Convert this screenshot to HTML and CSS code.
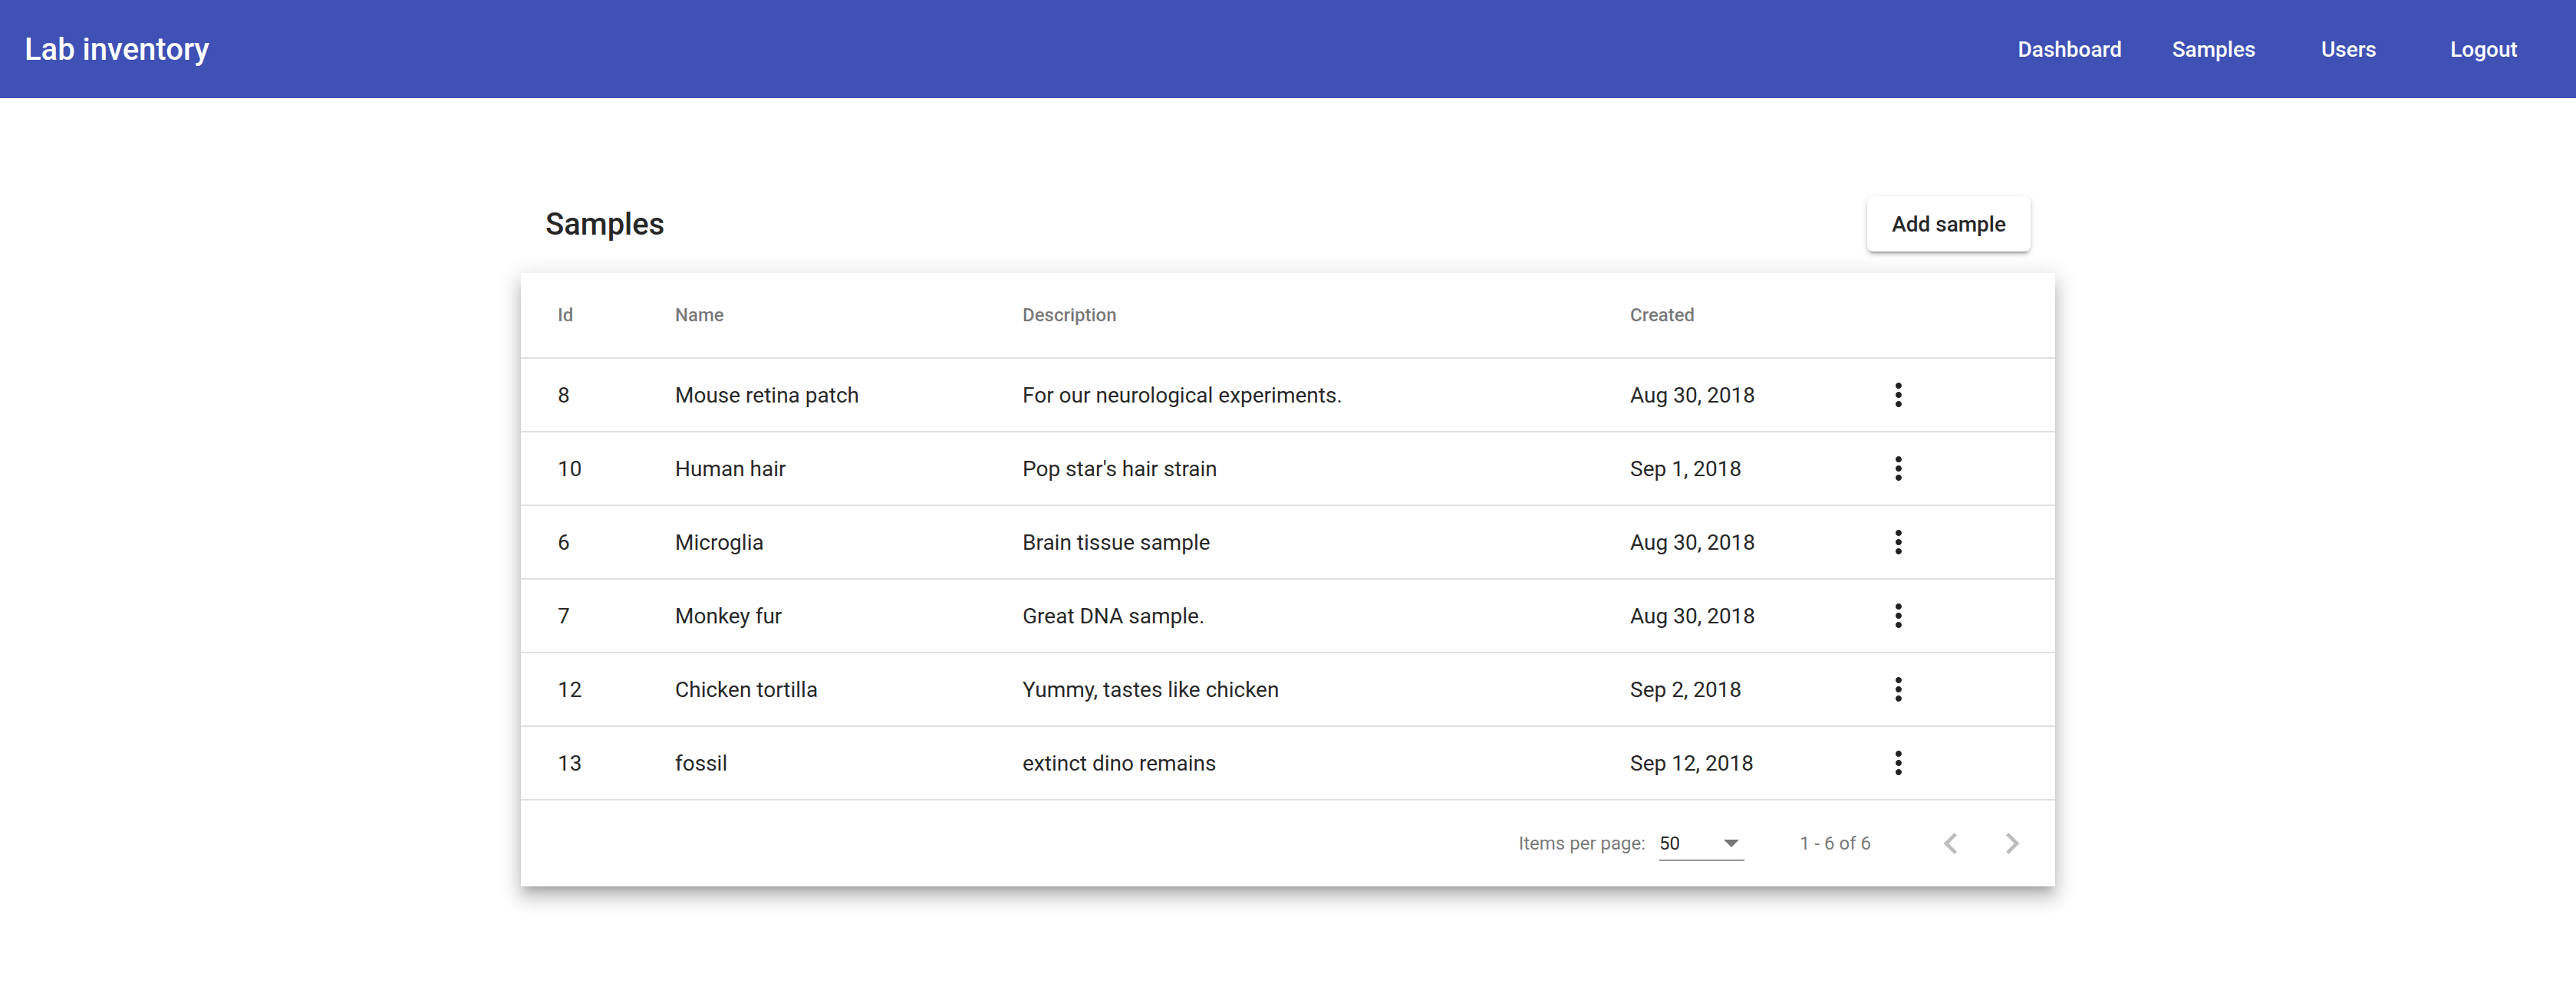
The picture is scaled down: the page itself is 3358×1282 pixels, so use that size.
FILE: index.html
```html
<!DOCTYPE html>
<html>
<head>
<meta charset="utf-8">
<title>Lab inventory</title>
<link rel="stylesheet" href="styles.css">
</head>
<body>
<header class="toolbar">
  <span class="app-title">Lab inventory</span>
  <span class="spacer"></span>
  <nav class="nav">
    <a class="nav-btn">Dashboard</a>
    <a class="nav-btn">Samples</a>
    <a class="nav-btn">Users</a>
    <a class="nav-btn">Logout</a>
  </nav>
</header>

<main class="content">
  <div class="page-head">
    <h2 class="page-title">Samples</h2>
    <button class="raised-btn">Add sample</button>
  </div>

  <section class="card">
    <div class="row header-row">
      <div class="cell">Id</div>
      <div class="cell">Name</div>
      <div class="cell">Description</div>
      <div class="cell">Created</div>
      <div class="cell"></div>
    </div>

    <div class="row">
      <div class="cell">8</div>
      <div class="cell">Mouse retina patch</div>
      <div class="cell">For our neurological experiments.</div>
      <div class="cell">Aug 30, 2018</div>
      <div class="cell"><button class="icon-btn"><svg viewBox="0 0 24 24" class="kebab"><path d="M12 8c1.1 0 2-.9 2-2s-.9-2-2-2-2 .9-2 2 .9 2 2 2zm0 2c-1.1 0-2 .9-2 2s.9 2 2 2 2-.9 2-2-.9-2-2-2zm0 6c-1.1 0-2 .9-2 2s.9 2 2 2 2-.9 2-2-.9-2-2-2z"/></svg></button></div>
    </div>
    <div class="row">
      <div class="cell">10</div>
      <div class="cell">Human hair</div>
      <div class="cell">Pop star's hair strain</div>
      <div class="cell">Sep 1, 2018</div>
      <div class="cell"><button class="icon-btn"><svg viewBox="0 0 24 24" class="kebab"><path d="M12 8c1.1 0 2-.9 2-2s-.9-2-2-2-2 .9-2 2 .9 2 2 2zm0 2c-1.1 0-2 .9-2 2s.9 2 2 2 2-.9 2-2-.9-2-2-2zm0 6c-1.1 0-2 .9-2 2s.9 2 2 2 2-.9 2-2-.9-2-2-2z"/></svg></button></div>
    </div>
    <div class="row">
      <div class="cell">6</div>
      <div class="cell">Microglia</div>
      <div class="cell">Brain tissue sample</div>
      <div class="cell">Aug 30, 2018</div>
      <div class="cell"><button class="icon-btn"><svg viewBox="0 0 24 24" class="kebab"><path d="M12 8c1.1 0 2-.9 2-2s-.9-2-2-2-2 .9-2 2 .9 2 2 2zm0 2c-1.1 0-2 .9-2 2s.9 2 2 2 2-.9 2-2-.9-2-2-2zm0 6c-1.1 0-2 .9-2 2s.9 2 2 2 2-.9 2-2-.9-2-2-2z"/></svg></button></div>
    </div>
    <div class="row">
      <div class="cell">7</div>
      <div class="cell">Monkey fur</div>
      <div class="cell">Great DNA sample.</div>
      <div class="cell">Aug 30, 2018</div>
      <div class="cell"><button class="icon-btn"><svg viewBox="0 0 24 24" class="kebab"><path d="M12 8c1.1 0 2-.9 2-2s-.9-2-2-2-2 .9-2 2 .9 2 2 2zm0 2c-1.1 0-2 .9-2 2s.9 2 2 2 2-.9 2-2-.9-2-2-2zm0 6c-1.1 0-2 .9-2 2s.9 2 2 2 2-.9 2-2-.9-2-2-2z"/></svg></button></div>
    </div>
    <div class="row">
      <div class="cell">12</div>
      <div class="cell">Chicken tortilla</div>
      <div class="cell">Yummy, tastes like chicken</div>
      <div class="cell">Sep 2, 2018</div>
      <div class="cell"><button class="icon-btn"><svg viewBox="0 0 24 24" class="kebab"><path d="M12 8c1.1 0 2-.9 2-2s-.9-2-2-2-2 .9-2 2 .9 2 2 2zm0 2c-1.1 0-2 .9-2 2s.9 2 2 2 2-.9 2-2-.9-2-2-2zm0 6c-1.1 0-2 .9-2 2s.9 2 2 2 2-.9 2-2-.9-2-2-2z"/></svg></button></div>
    </div>
    <div class="row">
      <div class="cell">13</div>
      <div class="cell">fossil</div>
      <div class="cell">extinct dino remains</div>
      <div class="cell">Sep 12, 2018</div>
      <div class="cell"><button class="icon-btn"><svg viewBox="0 0 24 24" class="kebab"><path d="M12 8c1.1 0 2-.9 2-2s-.9-2-2-2-2 .9-2 2 .9 2 2 2zm0 2c-1.1 0-2 .9-2 2s.9 2 2 2 2-.9 2-2-.9-2-2-2zm0 6c-1.1 0-2 .9-2 2s.9 2 2 2 2-.9 2-2-.9-2-2-2z"/></svg></button></div>
    </div>

    <div class="paginator">
      <span class="page-size-label">Items per page:</span>
      <div class="page-select">
        <span class="page-select-value">50</span>
        <span class="select-arrow"></span>
      </div>
      <span class="range-label">1 - 6 of 6</span>
      <button class="page-btn" disabled><svg viewBox="0 0 24 24" class="chev"><path d="M15.41 7.41L14 6l-6 6 6 6 1.41-1.41L10.83 12z"/></svg></button>
      <button class="page-btn" disabled><svg viewBox="0 0 24 24" class="chev"><path d="M8.59 16.59L10 18l6-6-6-6-1.41 1.41L13.17 12z"/></svg></button>
    </div>
  </section>
</main>
</body>
</html>
```

FILE: styles.css
```css
* { box-sizing: border-box; }

html, body {
  margin: 0;
  padding: 0;
  background: #ffffff;
  font-family: Roboto, "Helvetica Neue", "Liberation Sans", sans-serif;
  color: rgba(0, 0, 0, 0.87);
}

.toolbar {
  height: 128px;
  background: #3f51b5;
  color: #ffffff;
  display: flex;
  align-items: center;
  padding: 0 32px;
}

.app-title {
  font-size: 40px;
  font-weight: 500;
}

.spacer { flex: 1 1 auto; }

.nav {
  display: flex;
  align-items: center;
}

.nav-btn {
  min-width: 176px;
  height: 72px;
  padding: 0 32px;
  display: flex;
  align-items: center;
  justify-content: center;
  font-size: 28px;
  font-weight: 500;
  color: #ffffff;
  cursor: pointer;
}

.content {
  width: 2000px;
  margin: 0 auto;
  padding-top: 128px;
  padding-bottom: 120px;
}

.page-head {
  height: 72px;
  display: flex;
  align-items: center;
  justify-content: space-between;
  padding: 0 32px;
  margin-bottom: 28px;
}

.page-title {
  margin: 0;
  font-size: 40px;
  font-weight: 500;
  color: rgba(0, 0, 0, 0.87);
}

.raised-btn {
  height: 72px;
  padding: 0 32px;
  min-width: 176px;
  border: none;
  border-radius: 8px;
  background: #ffffff;
  font-family: inherit;
  font-size: 28px;
  font-weight: 500;
  color: rgba(0, 0, 0, 0.87);
  box-shadow: 0 6px 2px -4px rgba(0,0,0,.2), 0 4px 4px 0 rgba(0,0,0,.14), 0 2px 10px 0 rgba(0,0,0,.12);
}

.card {
  background: #ffffff;
  box-shadow: 0 10px 10px -6px rgba(0,0,0,.2), 0 16px 20px 2px rgba(0,0,0,.14), 0 6px 28px 4px rgba(0,0,0,.12);
}

.row {
  display: grid;
  grid-template-columns: 153px 453px 792px 310px 1fr;
  align-items: center;
  height: 96px;
  padding-left: 48px;
  padding-right: 48px;
  border-bottom: 2px solid rgba(0, 0, 0, 0.12);
  font-size: 28px;
  color: rgba(0, 0, 0, 0.87);
}

.header-row {
  height: 112px;
  font-size: 24px;
  font-weight: 500;
  color: rgba(0, 0, 0, 0.54);
}

.cell {
  white-space: nowrap;
  display: flex;
  align-items: center;
}

.icon-btn {
  width: 80px;
  height: 80px;
  border: none;
  background: transparent;
  padding: 0;
  display: flex;
  align-items: center;
  justify-content: center;
}

.kebab {
  width: 48px;
  height: 48px;
  fill: rgba(0, 0, 0, 0.87);
}

.paginator {
  height: 112px;
  display: flex;
  align-items: center;
  justify-content: flex-end;
  padding: 0 16px;
  font-size: 24px;
  color: rgba(0, 0, 0, 0.54);
}

.page-size-label {
  margin-right: 18px;
}

.page-select {
  width: 111px;
  height: 46px;
  display: flex;
  align-items: center;
  justify-content: space-between;
  padding-top: 2px;
  padding-right: 7px;
  border-bottom: 2px solid rgba(0, 0, 0, 0.42);
}

.page-select-value {
  color: rgba(0, 0, 0, 0.87);
}

.select-arrow {
  width: 0;
  height: 0;
  border-left: 10px solid transparent;
  border-right: 10px solid transparent;
  border-top: 10px solid rgba(0, 0, 0, 0.54);
}

.range-label {
  margin: 0 64px 0 72px;
}

.page-btn {
  width: 80px;
  height: 80px;
  border: none;
  background: transparent;
  padding: 0;
  display: flex;
  align-items: center;
  justify-content: center;
}

.chev {
  width: 56px;
  height: 56px;
  fill: rgba(0, 0, 0, 0.26);
}
```
